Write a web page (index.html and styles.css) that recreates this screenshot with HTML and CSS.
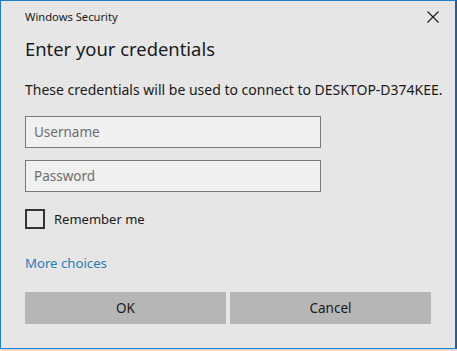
FILE: index.html
```html
<!DOCTYPE html>
<html lang="en">

<head>
  <meta charset="UTF-8">
  <title>Windows Security</title>
  <link rel="stylesheet" href="styles.css">
</head>

<body>
  <div class="dialog">
    <div class="title-bar">
      <span class="app-name">Windows Security</span>
      <button class="close" aria-label="Close">
        <svg width="12" height="12" viewBox="0 0 12 12">
          <path d="M0.5 0.5 L11.5 11.5 M11.5 0.5 L0.5 11.5" stroke="#1a1a1a" stroke-width="1.1" fill="none" />
        </svg>
      </button>
    </div>
    <h1>Enter your credentials</h1>
    <p class="info">These credentials will be used to connect to DESKTOP-D374KEE.</p>
    <div class="fields">
      <input type="text" placeholder="Username">
      <input type="password" placeholder="Password">
    </div>
    <label class="remember">
      <span class="box"></span>
      Remember me
    </label>
    <a class="more" href="#">More choices</a>
    <div class="buttons">
      <button>OK</button>
      <button>Cancel</button>
    </div>
  </div>
</body>

</html>
```

FILE: styles.css
```css
body {
  margin: 0;
  padding: 0;
  background-color: #dcdcdc;
  font-family: 'Noto Sans', 'Open Sans', sans-serif;
  color: #000;
}

.dialog {
  width: 457px;
  height: 349px;
  box-sizing: border-box;
  border: 1px solid #1c7dcb;
  border-right: 2px solid #1c5f9a;
  background-color: #e6e6e6;
  padding: 0 0 0 24px;
}

.title-bar {
  display: flex;
  justify-content: space-between;
  align-items: center;
  height: 32px;
  padding-right: 16px;
}

.app-name {
  font-size: 11.2px;
  color: #1a1a1a;
  margin-top: -1px;
}

.close {
  border: none;
  background: none;
  padding: 0;
  width: 12px;
  height: 12px;
  display: flex;
}

h1 {
  margin: 2px 0 0;
  font-size: 18.4px;
  font-weight: normal;
  line-height: 28px;
  color: #1a1a1a;
}

.info {
  margin: 17px 0 0;
  font-size: 14px;
  line-height: 20px;
  color: #1a1a1a;
}

.fields {
  display: flex;
  flex-direction: column;
  gap: 12px;
  margin-top: 16px;
}

.fields input {
  width: 296px;
  height: 32px;
  box-sizing: border-box;
  border: 1px solid #7a7a7a;
  background-color: #f0f0f0;
  padding: 0 8px;
  font-family: 'Noto Sans', 'Open Sans', sans-serif;
  font-size: 13.5px;
  outline: none;
}

.fields input::placeholder {
  color: #6d6d6d;
}

.remember {
  display: flex;
  align-items: center;
  gap: 9px;
  margin-top: 17px;
  font-size: 13px;
  color: #1a1a1a;
}

.box {
  width: 20px;
  height: 20px;
  box-sizing: border-box;
  border: 2px solid #333;
}

.more {
  display: block;
  width: max-content;
  margin-top: 24px;
  font-size: 13.2px;
  line-height: 20px;
  color: #2a7ab8;
  text-decoration: none;
}

.buttons {
  display: flex;
  gap: 4px;
  margin-top: 19px;
}

.buttons button {
  width: 201px;
  height: 32px;
  border: none;
  background-color: #b6b6b6;
  font-family: 'Noto Sans', 'Open Sans', sans-serif;
  font-size: 13.5px;
  color: #1a1a1a;
  padding: 0;
}
```
